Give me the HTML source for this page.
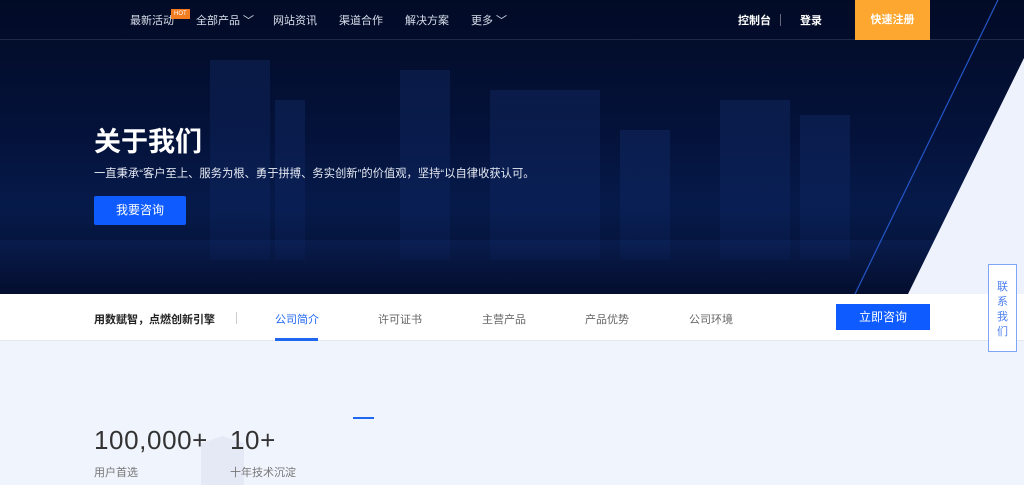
<!DOCTYPE html>
<html><head><meta charset="utf-8"><style>
*{margin:0;padding:0;box-sizing:border-box}
body{width:1024px;height:485px;overflow:hidden;background:#f0f4fd;font-family:"Liberation Sans","Noto Sans CJK SC",sans-serif;position:relative}
.hero{position:absolute;left:0;top:0;width:1024px;height:294px;background:linear-gradient(180deg,#020b26 0%,#04123a 45%,#061a4a 70%,#030d2c 100%);overflow:hidden}
.b{position:absolute;background:linear-gradient(180deg,rgba(40,80,170,.18),rgba(20,50,130,.12));}
.nav{position:absolute;top:0;left:0;width:1024px;height:40px;border-bottom:1px solid rgba(255,255,255,.12)}
.nav span{position:absolute;top:12px;color:#d8deeb;font-size:11px}
.hot{position:absolute;left:171px;top:9px;background:#f27c20;color:#fff;font-size:6px;padding:1px 3px;line-height:8px}
.reg{position:absolute;left:855px;top:0;width:75px;height:40px;background:#fda731;color:#fff;font-size:11px;font-weight:bold;text-align:center;line-height:40px}
h1{position:absolute;left:94px;top:120px;color:#fff;font-size:27px;font-weight:bold}
.sub{position:absolute;left:94px;top:165px;color:#e6eaf3;font-size:11.3px}
.btn{position:absolute;left:94px;top:196px;width:92px;height:29px;background:#0e5bff;border-radius:2px;color:#fff;font-size:12px;text-align:center;line-height:29px}
.tabs{position:absolute;top:294px;left:0;width:1024px;height:47px;background:#fff;border-bottom:1px solid #e3e7ef}
.tabs span{position:absolute;top:17px;font-size:11px;color:#666}
.cta{position:absolute;left:836px;top:10px;width:94px;height:26px;background:#0e5bff;color:#fff;font-size:12px;text-align:center;line-height:26px}
.side{position:absolute;left:988px;top:264px;width:29px;height:88px;background:#fff;border:1px solid #7fa6f5;color:#4c7ff0;font-size:11px;text-align:center;padding-top:15px;line-height:15px}
.num{position:absolute;top:425px;font-size:26px;color:#333;font-family:"Liberation Sans",sans-serif;letter-spacing:.6px}
.lbl{position:absolute;top:464px;font-size:11px;color:#777}
</style></head><body>
<div class="hero">
<div class="b" style="left:210px;top:60px;width:60px;height:200px"></div>
<div class="b" style="left:275px;top:100px;width:30px;height:160px"></div>
<div class="b" style="left:400px;top:70px;width:50px;height:190px"></div>
<div class="b" style="left:490px;top:90px;width:110px;height:170px"></div>
<div class="b" style="left:620px;top:130px;width:50px;height:130px"></div>
<div class="b" style="left:720px;top:100px;width:70px;height:160px"></div>
<div class="b" style="left:800px;top:115px;width:50px;height:145px"></div>
<div style="position:absolute;left:0;top:240px;width:1024px;height:54px;background:linear-gradient(180deg,rgba(30,70,160,.15),rgba(5,15,50,.5))"></div>
<svg style="position:absolute;left:0;top:0" width="1024" height="294"><polygon points="1024,58 1024,294 908,294" fill="#eef2fd"/><line x1="998" y1="0" x2="855" y2="294" stroke="#2456c8" stroke-width="1.2"/></svg>
</div>
<div class="nav">
<span style="left:130px">最新活动</span><div class="hot">HOT</div>
<span style="left:196px">全部产品 ﹀</span>
<span style="left:273px">网站资讯</span>
<span style="left:339px">渠道合作</span>
<span style="left:405px">解决方案</span>
<span style="left:471px">更多 ﹀</span>
<span style="left:738px;color:#fff;font-weight:bold">控制台</span>
<div style="position:absolute;left:780px;top:14px;width:1px;height:12px;background:#667"></div>
<span style="left:800px;color:#fff;font-weight:bold">登录</span>
</div>
<div class="reg">快速注册</div>
<h1>关于我们</h1>
<div class="sub">一直秉承“客户至上、服务为根、勇于拼搏、务实创新”的价值观，坚持“以自律收获认可。</div>
<div class="btn">我要咨询</div>
<div class="tabs">
<span style="left:94px;color:#222;font-weight:bold">用数赋智，点燃创新引擎</span>
<div style="position:absolute;left:236px;top:18px;width:1px;height:12px;background:#ccc"></div>
<span style="left:275px;color:#1f66f0">公司简介</span>
<div style="position:absolute;left:275px;top:44px;width:43px;height:3px;background:#1f66f0"></div>
<span style="left:378px">许可证书</span>
<span style="left:482px">主营产品</span>
<span style="left:585px">产品优势</span>
<span style="left:689px">公司环境</span>
<div class="cta">立即咨询</div>
</div>
<div class="side">联<br>系<br>我<br>们</div>
<div style="position:absolute;left:353px;top:417px;width:21px;height:2px;background:#1f66f0"></div>
<div style="position:absolute;left:201px;top:436px;width:43px;height:49px;background:#e4e9f5;clip-path:polygon(0 15%,50% 0,100% 15%,100% 100%,0 100%)"></div>
<div class="num" style="left:94px">100,000+</div>
<div class="num" style="left:230px">10+</div>
<div class="lbl" style="left:94px">用户首选</div>
<div class="lbl" style="left:230px">十年技术沉淀</div>
</body></html>
